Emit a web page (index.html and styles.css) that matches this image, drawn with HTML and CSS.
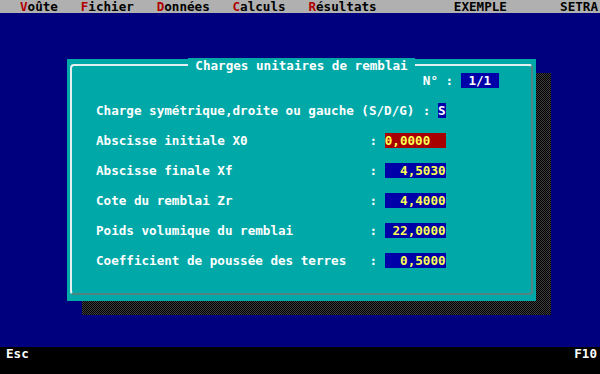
FILE: index.html
```html
<!DOCTYPE html>
<html lang="fr">
<head>
    <meta charset="UTF-8">
    <meta name="viewport" content="width=device-width, initial-scale=1.0">
    <title>Voûte - Charges unitaires de remblai</title>
    <link rel="stylesheet" href="styles.css">
</head>
<body>
    <div class="screen">
        <nav class="menubar">
            <div class="menu-left">
                <span class="menu-item"><span class="hot">V</span>oûte</span>
                <span class="menu-item"><span class="hot">F</span>ichier</span>
                <span class="menu-item"><span class="hot">D</span>onnées</span>
                <span class="menu-item"><span class="hot">C</span>alculs</span>
                <span class="menu-item"><span class="hot">R</span>ésultats</span>
            </div>
            <div class="menu-right">
                <span>EXEMPLE</span>
                <span>SETRA</span>
            </div>
        </nav>

        <main class="desk">
            <section class="dialog">
                <div class="frame">
                    <div class="title">Charges unitaires de remblai</div>

                    <div class="row row-num">
                        <span class="label-num">N° :</span>
                        <span class="field field-num">1/1</span>
                    </div>

                    <div class="row row-wide">
                        <span class="label">Charge symétrique,droite ou gauche (S/D/G)</span>
                        <span class="colon">:</span>
                        <span class="field field-char">S</span>
                    </div>
                    <div class="row">
                        <span class="label">Abscisse initiale X0</span>
                        <span class="colon">:</span>
                        <span class="field field-edit">0,0000</span>
                    </div>
                    <div class="row">
                        <span class="label">Abscisse finale Xf</span>
                        <span class="colon">:</span>
                        <span class="field">4,5030</span>
                    </div>
                    <div class="row">
                        <span class="label">Cote du remblai Zr</span>
                        <span class="colon">:</span>
                        <span class="field">4,4000</span>
                    </div>
                    <div class="row">
                        <span class="label">Poids volumique du remblai</span>
                        <span class="colon">:</span>
                        <span class="field">22,0000</span>
                    </div>
                    <div class="row">
                        <span class="label">Coefficient de poussée des terres</span>
                        <span class="colon">:</span>
                        <span class="field">0,5000</span>
                    </div>
                </div>
            </section>
        </main>

        <footer class="statusbar">
            <span>Esc</span>
            <span>F10</span>
        </footer>
    </div>
</body>
</html>
```

FILE: styles.css
```css
/* ecran mode texte : 80 colonnes de 7.6px, lignes de 15px */
:root {
    --c: 7.6px;
    --line: 15px;
    --blue: #00007f;
    --field-blue: #0000a8;
    --teal: #00a8a8;
}

* { box-sizing: border-box; }

body {
    margin: 0;
    background: #000;
    font-family: "DejaVu Sans Mono", "Liberation Mono", monospace;
    font-size: 12.6px;
    font-weight: bold;
    overflow: hidden;
}

.screen {
    width: 600px;
    height: 374px;
    display: flex;
    flex-direction: column;
}

/* barre de menu */
.menubar {
    height: 13px;
    line-height: 13px;
    background: #b0b0b0;
    color: #000;
    display: flex;
    justify-content: space-between;
    padding: 0 2px 0 20px;
    white-space: pre;
}
.menu-left { display: flex; gap: calc(3 * var(--c)); }
.menu-right { display: flex; gap: calc(7 * var(--c)); }
.hot { color: #b00000; }

/* bureau bleu */
.desk {
    position: relative;
    z-index: 0;
    flex: 1;
    background: var(--blue);
    padding: 46px 0 0 67px;
}

.dialog {
    position: relative;
    width: 469px;
    height: 242px;
    background: var(--teal);
    padding: 5px 3px 6px 3px;
}
/* ombre tramee sous la fenetre */
.dialog::before {
    content: "";
    position: absolute;
    left: 15px;
    top: 14px;
    width: 100%;
    height: 100%;
    background: repeating-conic-gradient(#000 0 25%, #3c3c3c 0 50%) 0 0 / 2px 2px;
    z-index: -1;
}

.frame {
    height: 100%;
    border: 2px solid;
    border-color: #e4f0f0 #4f8484 #4f8484 #e4f0f0;
    border-radius: 4px;
    display: flex;
    flex-direction: column;
    color: #fff;
    line-height: var(--line);
    white-space: pre;
}

.title {
    align-self: center;
    margin-top: -8px;
    padding: 0 var(--c);
    background: var(--teal);
}

.row {
    display: flex;
    padding-left: 24px;
    height: var(--line);
    margin-top: var(--line);
}
.row-num {
    margin-top: 0;
    padding-left: calc(24px + 43 * var(--c));
}
.label-num { width: calc(5 * var(--c)); }

.label { width: calc(36 * var(--c)); }
.row-wide .label { width: calc(43 * var(--c)); }
.colon { width: calc(2 * var(--c)); }

.field {
    width: calc(8 * var(--c));
    background: var(--field-blue);
    color: #ffff55;
    text-align: right;
}
.field-edit {
    background: #a80000;
    text-align: left;
}
.field-char {
    width: var(--c);
    color: #fff;
    text-align: left;
}
.field-num {
    width: calc(5 * var(--c));
    color: #fff;
    text-align: center;
}

/* barre d'etat */
.statusbar {
    height: 27px;
    background: #000;
    color: #fff;
    display: flex;
    justify-content: space-between;
    padding: 0 3px 0 6px;
    line-height: 14px;
}
```
